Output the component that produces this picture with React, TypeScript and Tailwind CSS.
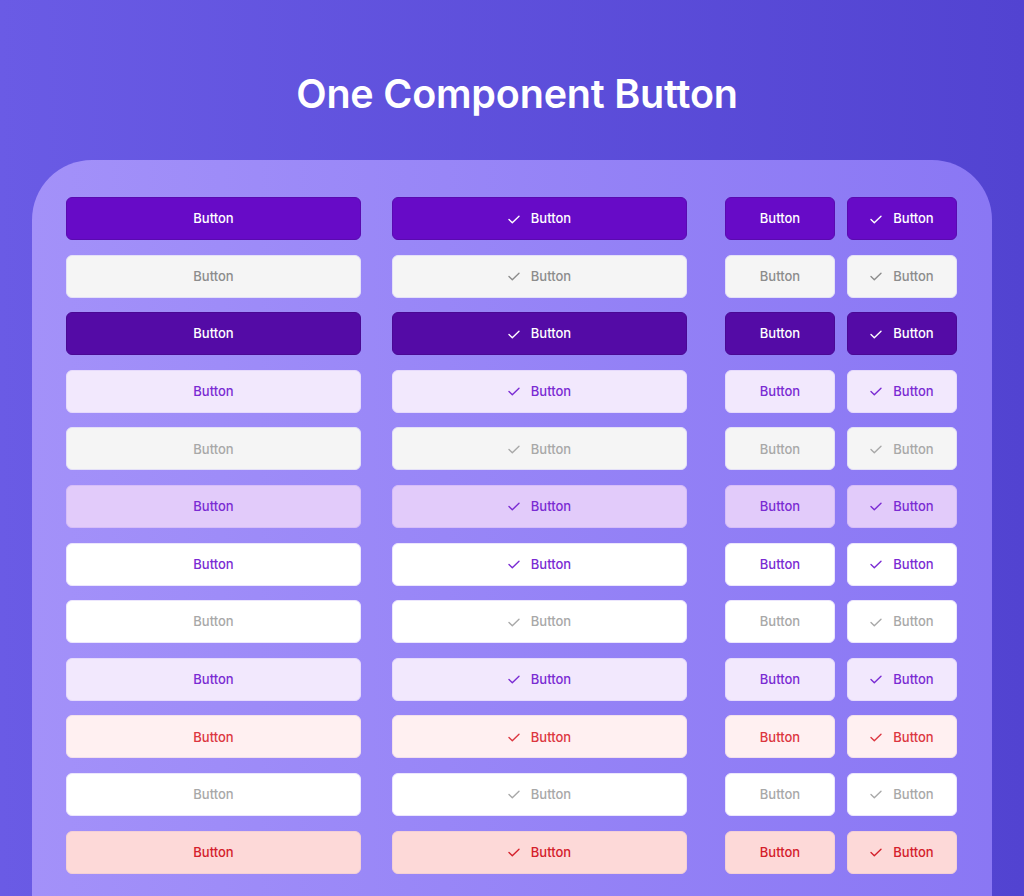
import React from "react";

type Variant = { bg: string; text: string; border: string };

const variants: Variant[] = [
  { bg: "bg-[#670bc7]", text: "text-white", border: "border-[#5a0ab0]" },
  { bg: "bg-[#f5f5f5]", text: "text-[#8c8c8c]", border: "border-[#e4e0f8]" },
  { bg: "bg-[#540ba6]", text: "text-white", border: "border-[#4a0994]" },
  { bg: "bg-[#f2e8fd]", text: "text-[#7a2bd3]", border: "border-[#e6dafc]" },
  { bg: "bg-[#f5f5f5]", text: "text-[#a8a8a8]", border: "border-[#e4e0f8]" },
  { bg: "bg-[#e2cbfa]", text: "text-[#7a2bd3]", border: "border-[#d6bdf8]" },
  { bg: "bg-white", text: "text-[#7a2bd3]", border: "border-[#ece6fd]" },
  { bg: "bg-white", text: "text-[#a8a8a8]", border: "border-[#ece6fd]" },
  { bg: "bg-[#f2e8fd]", text: "text-[#7a2bd3]", border: "border-[#e6dafc]" },
  { bg: "bg-[#fff0f1]", text: "text-[#dc3640]", border: "border-[#f3e0ec]" },
  { bg: "bg-white", text: "text-[#a8a8a8]", border: "border-[#ece6fd]" },
  { bg: "bg-[#fdd9d8]", text: "text-[#d4202b]", border: "border-[#f3cfd6]" },
];

const Check = () => (
  <svg width="12" height="9" viewBox="0 0 12 9" fill="none" className="shrink-0">
    <path d="M1 4.6 L4.3 7.8 L11 1.2" stroke="currentColor" strokeWidth="1.4" strokeLinecap="round" strokeLinejoin="round" />
  </svg>
);

function Btn({ v, icon, width }: { v: Variant; icon?: boolean; width: string }) {
  return (
    <div
      className={`${width} h-[43px] rounded-md border ${v.bg} ${v.border} ${v.text} flex items-center justify-center gap-[11px] pt-[1px] text-[13px] font-medium`}
    >
      {icon && <Check />}
      <span>Button</span>
    </div>
  );
}

export default function App() {
  return (
    <div
      className="w-[1024px] h-[896px] overflow-hidden bg-gradient-to-r from-[#6a5be5] to-[#5243d1] flex flex-col items-center"
      style={{ fontFamily: "Inter, 'Noto Sans', sans-serif" }}
    >
      <h1 className="pt-[70px] pl-[10px] text-[39.5px] leading-[48px] font-semibold text-white tracking-[-0.2px]">
        One Component Button
      </h1>
      <div className="mt-[42px] w-[960px] flex-1 rounded-t-[60px] bg-gradient-to-r from-[#a391f9] to-[#8a77f4] pl-[34px] pt-[37px]">
        <div className="flex">
          <div className="flex flex-col gap-[14.6px]">
            {variants.map((v, i) => (
              <Btn key={i} v={v} width="w-[295px]" />
            ))}
          </div>
          <div className="ml-[31px] flex flex-col gap-[14.6px]">
            {variants.map((v, i) => (
              <Btn key={i} v={v} icon width="w-[295px]" />
            ))}
          </div>
          <div className="ml-[38px] flex flex-col gap-[14.6px]">
            {variants.map((v, i) => (
              <Btn key={i} v={v} width="w-[110px]" />
            ))}
          </div>
          <div className="ml-[12px] flex flex-col gap-[14.6px]">
            {variants.map((v, i) => (
              <Btn key={i} v={v} icon width="w-[110px]" />
            ))}
          </div>
        </div>
      </div>
    </div>
  );
}
